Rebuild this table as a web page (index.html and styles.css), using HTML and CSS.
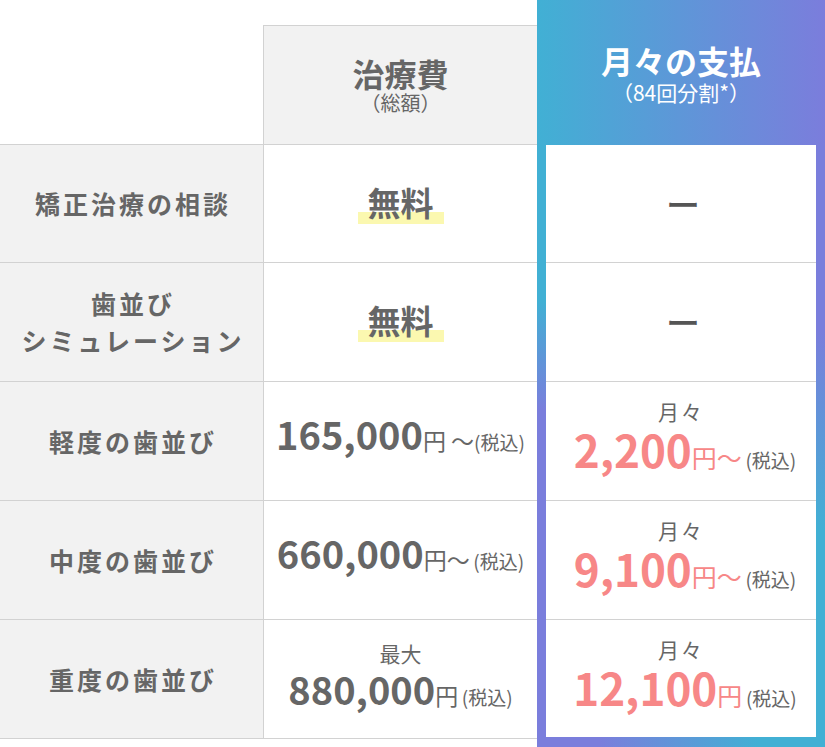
FILE: index.html
```html
<!DOCTYPE html>
<html lang="ja">
<head>
<meta charset="utf-8">
<title>料金表</title>
<link rel="stylesheet" href="styles.css">
</head>
<body>
<div class="compare">
  <div class="corner"></div>
  <div class="head-fee">
    <span class="head-title">治療費</span>
    <span class="head-sub">（総額）</span>
  </div>
  <div class="plan">
    <div class="plan-head">
      <span class="plan-title">月々の支払</span>
      <span class="plan-sub">（84回分割*）</span>
    </div>
    <div class="plan-body">
      <div class="plan-inner">
        <div class="plan-cell"><span class="dash">ー</span></div>
        <div class="plan-cell"><span class="dash">ー</span></div>
        <div class="plan-cell">
          <span class="monthly">月々</span>
          <span class="amount"><span class="num">2,200</span><span class="yen">円〜</span> <span class="tax">(税込)</span></span>
        </div>
        <div class="plan-cell">
          <span class="monthly">月々</span>
          <span class="amount"><span class="num">9,100</span><span class="yen">円〜</span> <span class="tax">(税込)</span></span>
        </div>
        <div class="plan-cell last">
          <span class="monthly">月々</span>
          <span class="amount"><span class="num">12,100</span><span class="yen">円</span> <span class="tax">(税込)</span></span>
        </div>
      </div>
    </div>
  </div>

  <div class="label">矯正治療の相談</div>
  <div class="fee"><span class="free">無料</span></div>

  <div class="label">歯並び<br>シミュレーション</div>
  <div class="fee"><span class="free">無料</span></div>

  <div class="label">軽度の歯並び</div>
  <div class="fee single"><span class="amount"><span class="num">165,000</span><span class="yen">円 〜</span><span class="tax">(税込)</span></span></div>

  <div class="label">中度の歯並び</div>
  <div class="fee single"><span class="amount"><span class="num">660,000</span><span class="yen">円〜</span> <span class="tax">(税込)</span></span></div>

  <div class="label">重度の歯並び</div>
  <div class="fee"><span class="max">最大</span><span class="amount"><span class="num">880,000</span><span class="yen">円</span> <span class="tax">(税込)</span></span></div>
</div>
</body>
</html>
```

FILE: styles.css
```css
* {
  box-sizing: border-box;
  margin: 0;
  padding: 0;
}

body {
  margin: 0;
  width: 825px;
  height: 747px;
  overflow: hidden;
  background: #fff;
  font-family: "Noto Sans CJK JP", "Noto Sans", sans-serif;
  color: #666;
}

.compare {
  display: grid;
  grid-template-columns: 264px 273px 288px;
  grid-template-rows: 145px 118px 119px 119px 119px 119px;
}

.corner {
  grid-column: 1;
  grid-row: 1;
  border-bottom: 1px solid #d2d2d2;
}

.head-fee {
  grid-column: 2;
  grid-row: 1;
  margin-top: 25px;
  margin-left: -1px;
  background: #f2f2f2;
  border-top: 1px solid #d2d2d2;
  border-left: 1px solid #d2d2d2;
  border-bottom: 1px solid #d2d2d2;
  display: flex;
  flex-direction: column;
  align-items: center;
  justify-content: center;
}

.head-title {
  font-size: 32px;
  font-weight: 700;
  line-height: 36px;
}

.head-sub {
  font-size: 20px;
  line-height: 24px;
}

.plan {
  grid-column: 3;
  grid-row: 1 / span 6;
  height: 747px;
  display: flex;
  flex-direction: column;
}

.plan-head {
  flex: none;
  height: 145px;
  background: linear-gradient(to right, #41b0d4, #7b7ddc);
  color: #fff;
  display: flex;
  flex-direction: column;
  align-items: center;
  justify-content: center;
}

.plan-title {
  font-size: 32px;
  font-weight: 700;
  line-height: 38px;
}

.plan-sub {
  font-size: 21px;
  line-height: 26px;
}

.plan-body {
  flex: 1;
  padding: 0 9px 10px;
  background:
    linear-gradient(to bottom, #41b0d4 26%, #7a7edc 44%) left top / 9px 100% no-repeat,
    linear-gradient(to bottom, #7a7edc 31%, #41b0d4 64%) right top / 9px 100% no-repeat,
    linear-gradient(to right, #7a7edc 22%, #41b0d4 77%) left bottom / 100% 10px no-repeat;
}

.plan-inner {
  height: 100%;
  background: #fff;
  display: flex;
  flex-direction: column;
}

.plan-cell {
  flex: none;
  height: 119px;
  border-bottom: 1px solid #d2d2d2;
  display: flex;
  flex-direction: column;
  align-items: center;
  justify-content: center;
}

.plan-cell:first-child {
  height: 118px;
}

.plan-cell.last {
  height: 117px;
  border-bottom: none;
}

.dash {
  font-size: 34px;
  font-weight: 500;
  color: #555;
  line-height: 36px;
  padding-left: 4px;
}

.label {
  grid-column: 1;
  background: #f2f2f2;
  border-right: 1px solid #d2d2d2;
  border-bottom: 1px solid #d2d2d2;
  display: flex;
  align-items: center;
  justify-content: center;
  text-align: center;
  font-size: 25px;
  font-weight: 700;
  letter-spacing: 3px;
  line-height: 37px;
  padding-left: 3px;
}

.fee {
  grid-column: 2;
  border-bottom: 1px solid #d2d2d2;
  display: flex;
  flex-direction: column;
  align-items: center;
  justify-content: center;
}

.fee.single {
  padding-bottom: 6px;
}

.free {
  display: inline-block;
  font-size: 33px;
  font-weight: 700;
  line-height: 36px;
  padding: 0 10px 4px;
  background: linear-gradient(#fbf8b0, #fbf8b0) left bottom / 100% 12px no-repeat;
}

.max {
  font-size: 21px;
  line-height: 28px;
}

.monthly {
  font-size: 21px;
  line-height: 28px;
  letter-spacing: 2px;
}

.amount {
  white-space: nowrap;
  line-height: 44px;
}

.num {
  font-size: 38px;
  font-weight: 700;
}

.yen {
  font-size: 23px;
}

.tax {
  font-size: 19px;
}

.plan .amount {
  line-height: 48px;
  padding-left: 8px;
}

.plan .num {
  font-size: 44px;
  color: #f78787;
}

.plan .yen {
  font-size: 25px;
  color: #f78787;
}

.plan .tax {
  font-size: 19px;
  color: #666;
}
```
